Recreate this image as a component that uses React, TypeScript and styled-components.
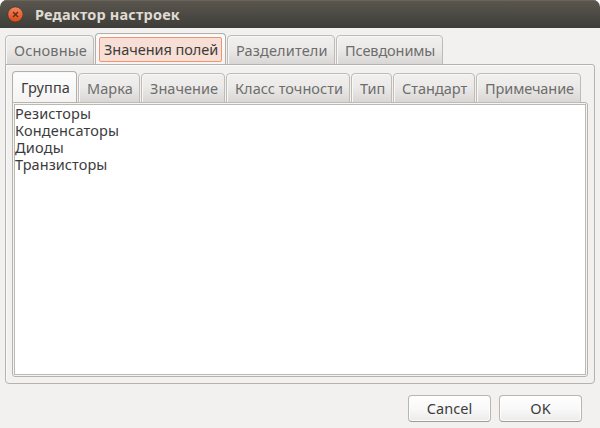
import React from "react";
import styled, { createGlobalStyle, css } from "styled-components";

const Global = createGlobalStyle`
  * { box-sizing: border-box; }
  body { margin: 0; background: #fff; overflow: hidden; }
  button { font: inherit; }
`;

const Window = styled.div`
  width: 600px;
  height: 428px;
  display: flex;
  flex-direction: column;
  background: #f2f1f0;
  border-radius: 7px 7px 0 0;
  overflow: hidden;
  font: 14.5px "Noto Sans", sans-serif;
  color: #3c3c3c;
`;

const TitleBar = styled.header`
  flex: none;
  height: 28px;
  padding-left: 7px;
  display: flex;
  align-items: center;
  gap: 12px;
  background: linear-gradient(#5b574f, #3e3d39);
  box-shadow: inset 0 1px #69655c;
`;

const Title = styled.h1<{ $track: number }>`
  margin: 0;
  font-size: 14.5px;
  line-height: 28px;
  font-weight: 700;
  letter-spacing: ${(p) => p.$track}px;
  color: #dfdbd2;
  white-space: nowrap;
`;

const Body = styled.main`
  flex: 1;
  display: flex;
  flex-direction: column;
  padding: 5px 5px 0;
`;

const TabStrip = styled.nav`
  display: flex;
  align-items: flex-end;
  gap: 1px;
  height: 32px;
  margin-bottom: -1px;
`;

const Tab = styled.button<{ $width: number; $active?: boolean; $track: number; $focused?: boolean }>`
  flex: none;
  width: ${(p) => p.$width}px;
  height: 30px;
  padding: ${(p) => (p.$focused ? "3px" : "0 0 1px 8px")};
  display: flex;
  align-items: center;
  border: 1px solid #bfbbb6;
  border-radius: 4px 4px 0 0;
  background: linear-gradient(#f1f0ef, #ebeae9 45%, #d9d7d5);
  box-shadow: inset 1px 1px #f8f7f7;
  color: #6e6d6b;
  letter-spacing: ${(p) => p.$track}px;
  white-space: nowrap;
  ${(p) =>
    p.$active &&
    css`
      height: 32px;
      border-color: #b3afa9;
      border-bottom-color: transparent;
      background: linear-gradient(#fdfdfd, #f4f3f2) padding-box;
      color: #3c3c3c;
    `}
`;

const FocusRing = styled.span`
  flex: 1;
  height: 25px;
  padding-left: 4px;
  display: flex;
  align-items: center;
  border: 1px solid #f09372;
  border-radius: 2px;
  background: #f7dfd5;
`;

const OuterPanel = styled.section`
  height: 320px;
  padding: 6px 6px 6px;
  border: 1px solid #b6b2ad;
  border-radius: 0 3px 4px 4px;
  box-shadow: inset 1px 1px #fbfbfb;
`;

const InnerPanel = styled.section`
  height: 275px;
  padding: 1px;
  border: 1px solid #b6b2ad;
  border-radius: 0 3px 3px 3px;
  background: #f6f5f4;
`;

const List = styled.ul`
  height: 100%;
  margin: 0;
  padding: 0;
  list-style: none;
  border: 1px solid #bcb8b2;
  background: #fff;
`;

const Item = styled.li<{ $track: number }>`
  height: 17px;
  line-height: 17px;
  letter-spacing: ${(p) => p.$track}px;
`;

const Actions = styled.footer`
  display: flex;
  justify-content: flex-end;
  gap: 8px;
  padding: 11px 13px 0 0;
`;

const Action = styled.button`
  width: 83px;
  height: 27px;
  padding: 0 0 2px;
  border: 1px solid #b9b5b0;
  border-bottom-color: #9f9b96;
  border-radius: 4px;
  background: linear-gradient(#fefefe, #f9f9f9 50%, #ebebea);
  box-shadow: inset 0 0 0 1px #fdfdfd;
  color: #3c3c3c;
  letter-spacing: 0.05px;
`;

const outerTabs = [
  { label: "Основные", width: 89, track: 0.15 },
  { label: "Значения полей", width: 131, track: -0.04 },
  { label: "Разделители", width: 108, track: 0.15 },
  { label: "Псевдонимы", width: 107, track: -0.1 },
];

const innerTabs = [
  { label: "Группа", width: 65, track: 0.1 },
  { label: "Марка", width: 62, track: 0.05 },
  { label: "Значение", width: 84, track: 0.05 },
  { label: "Класс точности", width: 124, track: 0.03 },
  { label: "Тип", width: 41, track: -0.1 },
  { label: "Стандарт", width: 82, track: 0 },
  { label: "Примечание", width: 105, track: -0.1 },
];

const items = [
  { label: "Резисторы", track: 0.15 },
  { label: "Конденсаторы", track: 0.18 },
  { label: "Диоды", track: 0.25 },
  { label: "Транзисторы", track: 0.06 },
];

const CloseIcon = () => (
  <svg width="16" height="28" viewBox="0 0 16 28" aria-label="Close">
    <defs>
      <linearGradient id="close" x1="0" y1="0" x2="0" y2="1">
        <stop offset="0" stopColor="#f4865e" />
        <stop offset="1" stopColor="#dd4814" />
      </linearGradient>
    </defs>
    <circle cx="8.4" cy="14.5" r="7.6" fill="url(#close)" stroke="#35332f" strokeWidth="0.6" />
    <path d="M6 12l5 5M11 12l-5 5" stroke="#55291b" strokeWidth="1.2" />
  </svg>
);

export default function App() {
  return (
    <>
      <Global />
      <Window>
        <TitleBar>
          <CloseIcon />
          <Title $track={0.18}>Редактор настроек</Title>
        </TitleBar>
        <Body>
          <TabStrip>
            {outerTabs.map((t, i) => (
              <Tab key={t.label} $width={t.width} $track={t.track} $active={i === 1} $focused={i === 1}>
                {i === 1 ? <FocusRing>{t.label}</FocusRing> : t.label}
              </Tab>
            ))}
          </TabStrip>
          <OuterPanel>
            <TabStrip>
              {innerTabs.map((t, i) => (
                <Tab key={t.label} $width={t.width} $track={t.track} $active={i === 0}>
                  {t.label}
                </Tab>
              ))}
            </TabStrip>
            <InnerPanel>
              <List>
                {items.map((t) => (
                  <Item key={t.label} $track={t.track}>{t.label}</Item>
                ))}
              </List>
            </InnerPanel>
          </OuterPanel>
          <Actions>
            <Action>Cancel</Action>
            <Action>OK</Action>
          </Actions>
        </Body>
      </Window>
    </>
  );
}
